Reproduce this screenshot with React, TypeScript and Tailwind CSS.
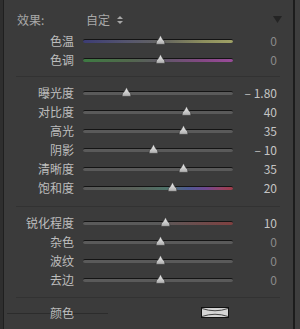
import React from "react";

type Row = { label: string; pos: number; value: string; track: string; zero?: boolean };

const GRAY = "linear-gradient(to right,#5a5a5a,#5a5a5a)";

const group1: Row[] = [
  { label: "色温", pos: 77, value: "0", zero: true, track: "linear-gradient(to right,#3c3c74,#56566e 30%,#66665f 55%,#8c8e5e 80%,#a0a266)" },
  { label: "色调", pos: 77, value: "0", zero: true, track: "linear-gradient(to right,#3d7a42,#51684c 30%,#62566a 55%,#844884 80%,#9a4c9a)" },
];
const group2: Row[] = [
  { label: "曝光度", pos: 43, value: "– 1.80", track: GRAY },
  { label: "对比度", pos: 103, value: "40", track: GRAY },
  { label: "高光", pos: 100, value: "35", track: GRAY },
  { label: "阴影", pos: 70, value: "– 10", track: GRAY },
  { label: "清晰度", pos: 100, value: "35", track: GRAY },
  { label: "饱和度", pos: 89, value: "20", track: "linear-gradient(to right,#585858,#5a625a 35%,#4e7268 55%,#4e5a92 70%,#704890 82%,#944266 92%,#a03c48)" },
];
const group3: Row[] = [
  { label: "锐化程度", pos: 82, value: "10", track: "linear-gradient(to right,#5a5a5a,#5a5a5a 50%,#724848 85%,#804040)" },
  { label: "杂色", pos: 77, value: "0", zero: true, track: GRAY },
  { label: "波纹", pos: 77, value: "0", zero: true, track: GRAY },
  { label: "去边", pos: 77, value: "0", zero: true, track: GRAY },
];

function Thumb() {
  return (
    <svg width="11" height="10" viewBox="0 0 11 10">
      <defs>
        <linearGradient id="tg" x1="0" y1="0" x2="0" y2="1">
          <stop offset="0" stopColor="#f2f2f2" />
          <stop offset="1" stopColor="#acacac" />
        </linearGradient>
      </defs>
      <path d="M5.5 0.3 L7.6 4.2 Q10.6 6.6 9.8 9.4 L1.2 9.4 Q0.4 6.6 3.4 4.2 Z" fill="url(#tg)" stroke="#2a2a2a" strokeWidth="0.6" />
    </svg>
  );
}

function SliderRow({ r }: { r: Row }) {
  return (
    <div className="flex h-[19px] items-center">
      <div className="w-[70px] text-right text-[12px] text-[#bdbdbd] leading-none">{r.label}</div>
      <div className="relative ml-[9px] flex h-[19px] w-[150px] items-center">
        <div
          className="h-[4px] w-full rounded-full border-t border-[#141414]"
          style={{ backgroundImage: r.track }}
        />
        <div className="absolute top-[4px]" style={{ left: r.pos - 5 }}>
          <Thumb />
        </div>
      </div>
      {r.zero ? (
        <div className="w-[44px] text-right text-[12px] leading-none text-[#8a8a8a]">{r.value}</div>
      ) : (
        <div className="w-[44px] text-right text-[12px] leading-none text-[#c4c4c4]">{r.value}</div>
      )}
    </div>
  );
}

export default function App() {
  const font = { fontFamily: '"Noto Sans CJK SC","Noto Sans",sans-serif' };
  return (
    <div className="flex h-[329px] w-[300px] overflow-hidden bg-[#3b3b3b]" style={font}>
      <div className="w-[4px] border-r border-[#1f1f1f] bg-[#2e2e2e]" />
      <div className="flex w-[289px] flex-col pt-[10px]">
        <div className="flex h-[19px] items-center text-[12px] leading-none text-[#a8a8a8]">
          <span className="ml-[13px] w-[69px]">效果:</span>
          <span>自定</span>
          <span className="ml-[7px] flex flex-col gap-[2px]">
            <svg width="6" height="3" viewBox="0 0 6 3"><path d="M0 3 L3 0 L6 3 Z" fill="#a8a8a8" /></svg>
            <svg width="6" height="3" viewBox="0 0 6 3"><path d="M0 0 L3 3 L6 0 Z" fill="#a8a8a8" /></svg>
          </span>
          <span className="ml-auto mr-[11px]">
            <svg width="9" height="7" viewBox="0 0 9 7"><path d="M0 0 L9 0 L4.5 7 Z" fill="#242424" /></svg>
          </span>
        </div>
        <div className="mt-[2px]">
          {group1.map((r) => <SliderRow key={r.label} r={r} />)}
        </div>
        <div className="ml-[12px] mt-[7px] mb-[6px] h-px w-[264px] bg-[#323232]" />
        {group2.map((r) => <SliderRow key={r.label} r={r} />)}
        <div className="ml-[12px] mt-[9px] mb-[6px] h-px w-[264px] bg-[#323232]" />
        {group3.map((r) => <SliderRow key={r.label} r={r} />)}
        <div className="ml-[12px] mt-[8px] mb-[5px] h-px w-[264px] bg-[#323232]" />
        <div className="relative flex h-[19px] items-center">
          <div className="absolute left-[3px] top-[10px] h-px w-[101px] bg-[#2c2c2c]" />
          <div className="relative w-[70px] text-right text-[12px] leading-none text-[#bdbdbd]">颜色</div>
          <div className="ml-[127px] h-[11px] w-[28px] border border-[#111] bg-[#d4d4d4]">
            <svg width="26" height="9" viewBox="0 0 26 9" className="block">
              <path d="M0 0.5 Q13 5 26 0.5 M0 8.5 Q13 4 26 8.5" stroke="#333" strokeWidth="0.9" fill="none" />
            </svg>
          </div>
        </div>
      </div>
      <div className="w-[2px] bg-[#1c1c1c]" />
      <div className="flex-1 bg-[#3e3e3e]" />
    </div>
  );
}
